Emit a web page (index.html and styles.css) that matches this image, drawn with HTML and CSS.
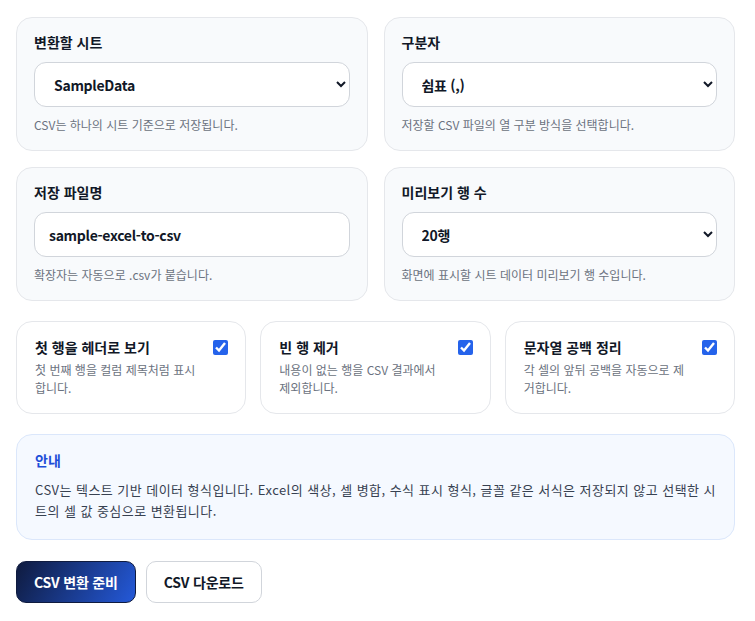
FILE: index.html
```html
<!DOCTYPE html>
<html lang="ko">
<head>
    <meta charset="UTF-8">
    <meta name="viewport" content="width=device-width, initial-scale=1.0">
    <title>Excel to CSV</title>
    <link rel="stylesheet" href="styles.css">
</head>
<body>
    <div class="panel">
        <div class="fields">
            <div class="field">
                <label class="field-label" for="sheet">변환할 시트</label>
                <select class="control" id="sheet">
                    <option>SampleData</option>
                </select>
                <p class="hint">CSV는 하나의 시트 기준으로 저장됩니다.</p>
            </div>
            <div class="field">
                <label class="field-label" for="delimiter">구분자</label>
                <select class="control" id="delimiter">
                    <option>쉼표 (,)</option>
                </select>
                <p class="hint">저장할 CSV 파일의 열 구분 방식을 선택합니다.</p>
            </div>
            <div class="field">
                <label class="field-label" for="filename">저장 파일명</label>
                <input class="control" id="filename" type="text" value="sample-excel-to-csv">
                <p class="hint">확장자는 자동으로 .csv가 붙습니다.</p>
            </div>
            <div class="field">
                <label class="field-label" for="rows">미리보기 행 수</label>
                <select class="control" id="rows">
                    <option>20행</option>
                </select>
                <p class="hint">화면에 표시할 시트 데이터 미리보기 행 수입니다.</p>
            </div>
        </div>

        <div class="options">
            <label class="option">
                <span class="option-text">
                    <strong>첫 행을 헤더로 보기</strong>
                    <span>첫 번째 행을 컬럼 제목처럼 표시합니다.</span>
                </span>
                <input type="checkbox" checked>
            </label>
            <label class="option">
                <span class="option-text">
                    <strong>빈 행 제거</strong>
                    <span>내용이 없는 행을 CSV 결과에서 제외합니다.</span>
                </span>
                <input type="checkbox" checked>
            </label>
            <label class="option">
                <span class="option-text">
                    <strong>문자열 공백 정리</strong>
                    <span>각 셀의 앞뒤 공백을 자동으로 제거합니다.</span>
                </span>
                <input type="checkbox" checked>
            </label>
        </div>

        <div class="notice">
            <h3>안내</h3>
            <p>CSV는 텍스트 기반 데이터 형식입니다. Excel의 색상, 셀 병합, 수식 표시 형식, 글꼴 같은 서식은 저장되지 않고 선택한 시트의 셀 값 중심으로 변환됩니다.</p>
        </div>

        <div class="actions">
            <button class="btn btn-primary">CSV 변환 준비</button>
            <button class="btn btn-outline">CSV 다운로드</button>
        </div>
    </div>
</body>
</html>
```

FILE: styles.css
```css
body {
    margin: 0;
    padding: 17px 20px 16px 16px;
    font-family: "Noto Sans CJK KR", "Noto Sans", sans-serif;
    color: #111827;
    background: #fff;
}
.panel {
    display: flex;
    flex-direction: column;
    gap: 20px;
}
.fields {
    display: grid;
    grid-template-columns: minmax(0, 1fr) minmax(0, 1fr);
    column-gap: 16px;
    row-gap: 16px;
}
.field {
    display: flex;
    flex-direction: column;
    padding: 14px 17px 17px 17px;
    background: #f8fafc;
    border: 1px solid #e5e7eb;
    border-radius: 16px;
}
.field-label {
    font-size: 14px;
    font-weight: 700;
    line-height: 20px;
    margin-bottom: 10px;
}
.control {
    box-sizing: border-box;
    width: 100%;
    height: 45px;
    padding: 0 8px 0 15px;
    font-family: inherit;
    font-size: 14px;
    font-weight: 700;
    letter-spacing: -0.3px;
    color: #111827;
    background: #fff;
    border: 1px solid #d1d5db;
    border-radius: 12px;
    outline: none;
}
input.control {
    padding-left: 14px;
}
.hint {
    margin: 10px 0 0;
    font-size: 12px;
    line-height: 16px;
    color: #6b7280;
}

.options {
    display: grid;
    grid-template-columns: repeat(3, minmax(0, 1fr));
    gap: 14px;
}
.option {
    display: flex;
    align-items: flex-start;
    justify-content: space-between;
    gap: 10px;
    padding: 15px 17px 16px 18px;
    border: 1px solid #e5e7eb;
    border-radius: 16px;
    background: #fff;
    cursor: pointer;
}
.option-text {
    display: flex;
    flex-direction: column;
    gap: 4px;
}
.option-text strong {
    font-size: 14px;
    line-height: 20px;
}
.option-text span {
    font-size: 12px;
    line-height: 18px;
    color: #6b7280;
}
.option input {
    width: 15px;
    height: 15px;
    margin: 3px 0 0;
    flex-shrink: 0;
    accent-color: #2563eb;
}

.notice {
    padding: 15px 18px 18px;
    background: #f5f9ff;
    border: 1px solid #dbe7fb;
    border-radius: 16px;
}
.notice h3 {
    margin: 0 0 9px;
    font-size: 14px;
    line-height: 20px;
    color: #1d4ed8;
}
.notice p {
    margin: 0;
    font-size: 13px;
    line-height: 21px;
    letter-spacing: 0.45px;
    color: #374151;
}

.actions {
    display: flex;
    gap: 10px;
    margin-top: 1px;
}
.btn {
    height: 42px;
    padding: 0 17px;
    font-family: inherit;
    font-size: 14px;
    font-weight: 700;
    letter-spacing: -0.2px;
    border-radius: 10px;
    cursor: pointer;
}
.btn-primary {
    color: #fff;
    background: linear-gradient(120deg, #0f1b3f, #2459d9);
    border: 1px solid #0f1b3f;
}
.btn-outline {
    color: #111827;
    background: #fff;
    border: 1px solid #d1d5db;
}
```
